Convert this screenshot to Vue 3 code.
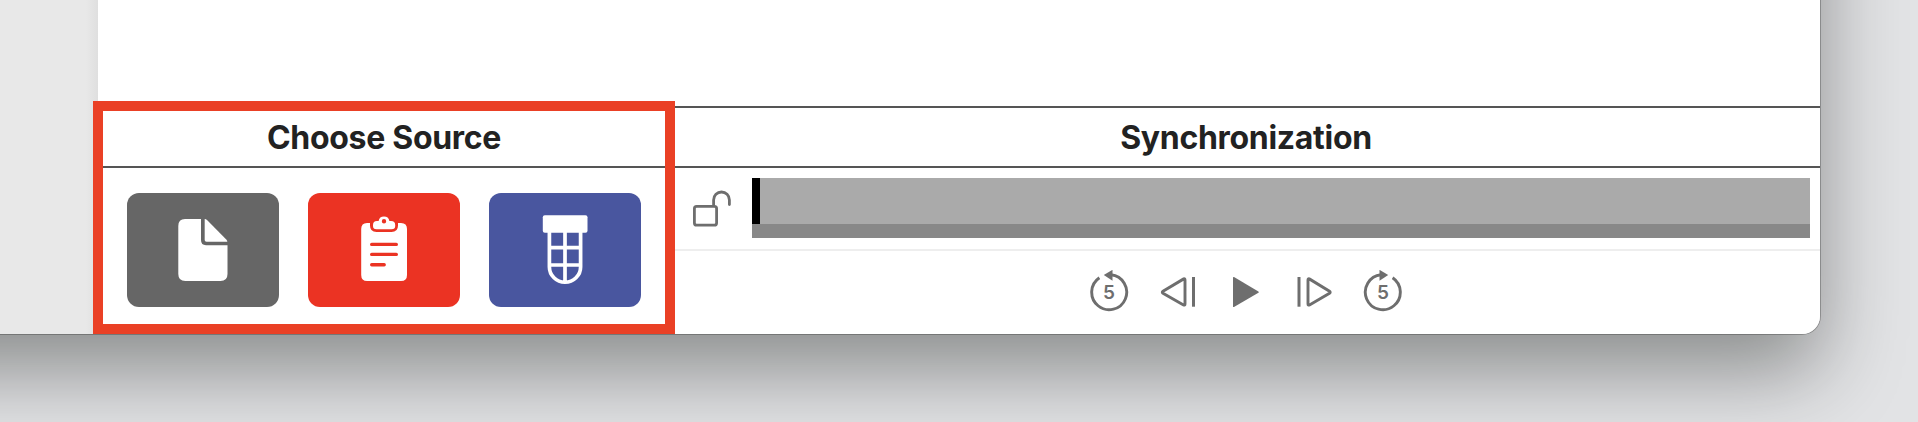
<script setup>
const sources = ['file', 'clipboard', 'tube']
</script>

<template>
  <div class="desktop">
    <div class="window">
      <aside class="sidebar"></aside>
      <main class="content">
        <div class="canvas"></div>
        <div class="panels">
          <section class="panel source">
            <h2 class="title">Choose Source</h2>
            <div class="source-buttons">
              <button v-for="s in sources" :key="s" class="source-btn" :class="s" :aria-label="s">
                <svg v-if="s === 'file'" width="152" height="114" viewBox="127 193 152 114" fill="#fff">
                  <path d="M185 219H201V240Q201 245.2 206 245.2H227.5V274Q227.5 281 220.5 281H185.3Q178.3 281 178.3 274V226Q178.3 219 185 219Z" />
                  <path d="M204.7 219Q206 219 207 220L226.5 239.7Q227.3 240.6 227.3 241.7H206.5Q204.7 241.7 204.7 240Z" />
                </svg>
                <svg v-else-if="s === 'clipboard'" width="152" height="114" viewBox="308 193 152 114">
                  <path fill="#fff" d="M367 223H370V225.5Q370 232 376.5 232H391.5Q398 232 398 225.5V223H401Q407 223 407 229V275Q407 281 401 281H367.2Q361.2 281 361.2 275V229Q361.2 223 367 223Z" />
                  <path fill="#fff" fill-rule="evenodd" d="M377 221H378.6A5.5 5.5 0 0 1 389.4 221H391Q395.2 221 395.2 225V226Q395.2 229.2 391.5 229.2H376.5Q373 229.2 373 226V225Q373 221 377 221ZM381.8 221.3A2.2 2.2 0 1 0 386.2 221.3A2.2 2.2 0 1 0 381.8 221.3Z" />
                  <path stroke="#eb3323" stroke-width="3.4" stroke-linecap="round" d="M371.7 244.4H396.3M371.7 254.4H396.3M371.7 264.7H384.2" />
                </svg>
                <svg v-else width="152" height="114" viewBox="489 193 152 114">
                  <rect x="542.8" y="215.3" width="44.7" height="17.5" rx="2" fill="#fff" />
                  <path fill="none" stroke="#fff" stroke-width="3.7" d="M549.4 231V267A15.6 15.3 0 0 0 580.6 267V231M565 231V282M549 247.7H581M549 265H581" />
                </svg>
              </button>
            </div>
          </section>

          <section class="panel sync">
            <h2 class="title">Synchronization</h2>
            <div class="timeline">
              <svg class="lock" width="40" height="38" viewBox="692 189 40 38" fill="none" stroke="#6e6e6e" stroke-width="2.8" stroke-linecap="round">
                <rect x="694.4" y="206.3" width="22.2" height="18.8" rx="2.2" />
                <path d="M713.6 205.5V200A7.9 8 0 0 1 729.4 200V204.6" />
              </svg>
              <div class="track">
                <div class="wave"><div class="playhead"></div></div>
                <div class="scroll"></div>
              </div>
            </div>
            <div class="controls">
              <svg width="40" height="45" viewBox="1089 270 40 45">
                <path class="line" d="M1111 274.8A17.5 17.5 0 1 1 1099.4 277.7" />
                <path class="solid" d="M1103.8 275L1112.5 269.8V280.8Z" />
                <text x="1109" y="299">5</text>
              </svg>
              <svg width="40" height="45" viewBox="1158 270 40 45">
                <path class="line" d="M1183.7 278.9Q1185 278.3 1185 280V304Q1185 305.6 1183.5 304.9L1163 293.2Q1161.6 292.2 1163 291.2Z" />
                <path class="line flat" d="M1193.5 277V306.7" />
              </svg>
              <svg width="40" height="45" viewBox="1226 270 40 45">
                <path class="solid" d="M1233 277.5Q1233 276.6 1234 277.1L1258.4 291.4Q1259.4 292.1 1258.4 292.8L1234 307Q1233 307.4 1233 306.5Z" />
              </svg>
              <svg width="40" height="45" viewBox="1294.5 270 40 45">
                <path class="line flat" d="M1298.5 277V306.7" />
                <path class="line" d="M1308.8 278.9Q1307.5 278.3 1307.5 280V304Q1307.5 305.6 1309 304.9L1329 293.2Q1330.4 292.2 1329 291.2Z" />
              </svg>
              <svg width="40" height="45" viewBox="1363 270 40 45">
                <path class="line" d="M1381 274.8A17.5 17.5 0 1 0 1392.6 277.7" />
                <path class="solid" d="M1388.2 275L1379.5 269.8V280.8Z" />
                <text x="1383" y="299">5</text>
              </svg>
            </div>
          </section>
        </div>
      </main>
    </div>
    <div class="highlight"></div>
  </div>
</template>

<style>
body {
  background: #e2e3e5;
}
</style>

<style scoped>
.desktop {
  position: relative;
  width: 1918px;
  height: 422px;
  overflow: hidden;
  background: #e2e3e5;
  font-family: Inter, "Liberation Sans", sans-serif;
}
.window {
  display: flex;
  box-sizing: border-box;
  width: 2120px;
  height: 634px;
  margin: -300px 0 0 -300px;
  padding-left: 300px;
  background: #e8e8e8;
  border-radius: 18px;
  overflow: hidden;
  box-shadow: 0 0 0 1px rgba(0, 0, 0, 0.24), 0 37px 82px rgba(2, 4, 0, 0.39);
}
.sidebar {
  flex: 0 0 98px;
  background: linear-gradient(to right, #e8e8e8 86px, #dfdfdf 98px);
}
.content {
  flex: 1;
  display: flex;
  flex-direction: column;
  background: #fff;
}
.canvas {
  flex: 1;
}
.panels {
  display: flex;
  gap: 2px;
  height: 228px;
  border-top: 2px solid #555;
  box-sizing: border-box;
}
.panel {
  display: flex;
  flex-direction: column;
}
.source {
  width: 572px;
}
.sync {
  flex: 1;
}
.title {
  margin: 0 -2px 0 0;
  height: 60px;
  box-sizing: border-box;
  border-bottom: 2px solid #555;
  padding-right: 2px;
  font-size: 32px;
  line-height: 59px;
  font-weight: 700;
  letter-spacing: -0.3px;
  text-align: center;
  color: #222;
}
.sync .title {
  margin-right: 0;
  padding-right: 0;
}
.source-buttons {
  display: flex;
  gap: 29px;
  padding: 25px 29px 0;
}
.source-btn {
  width: 152px;
  height: 114px;
  padding: 0;
  border: 0;
  border-radius: 12px;
}
.source-btn svg {
  display: block;
}
.file {
  background: #666;
}
.clipboard {
  background: #eb3323;
}
.tube {
  background: #49569f;
}
.timeline {
  display: flex;
  gap: 20px;
  height: 83px;
  box-sizing: border-box;
  padding: 10px 10px 0 20px;
  border-bottom: 2px solid #eee;
}
.lock {
  margin-top: 11px;
}
.track {
  flex: 1;
}
.wave {
  height: 46px;
  background: #aaa;
}
.playhead {
  width: 8px;
  height: 46px;
  background: #000;
}
.scroll {
  height: 14px;
  background: #888;
}
.controls {
  flex: 1;
  display: flex;
  align-items: center;
  justify-content: center;
  gap: 28.5px;
}
.controls text {
  font-size: 19px;
  font-weight: 600;
  text-anchor: middle;
  fill: #6e6e6e;
}
.line {
  fill: none;
  stroke: #6e6e6e;
  stroke-width: 2.9;
}
.flat {
  stroke-width: 3;
}
.solid {
  fill: #6e6e6e;
}
.highlight {
  position: absolute;
  left: 93px;
  top: 101px;
  width: 582px;
  height: 233px;
  box-sizing: border-box;
  border: 10px solid #ea4025;
}
</style>
